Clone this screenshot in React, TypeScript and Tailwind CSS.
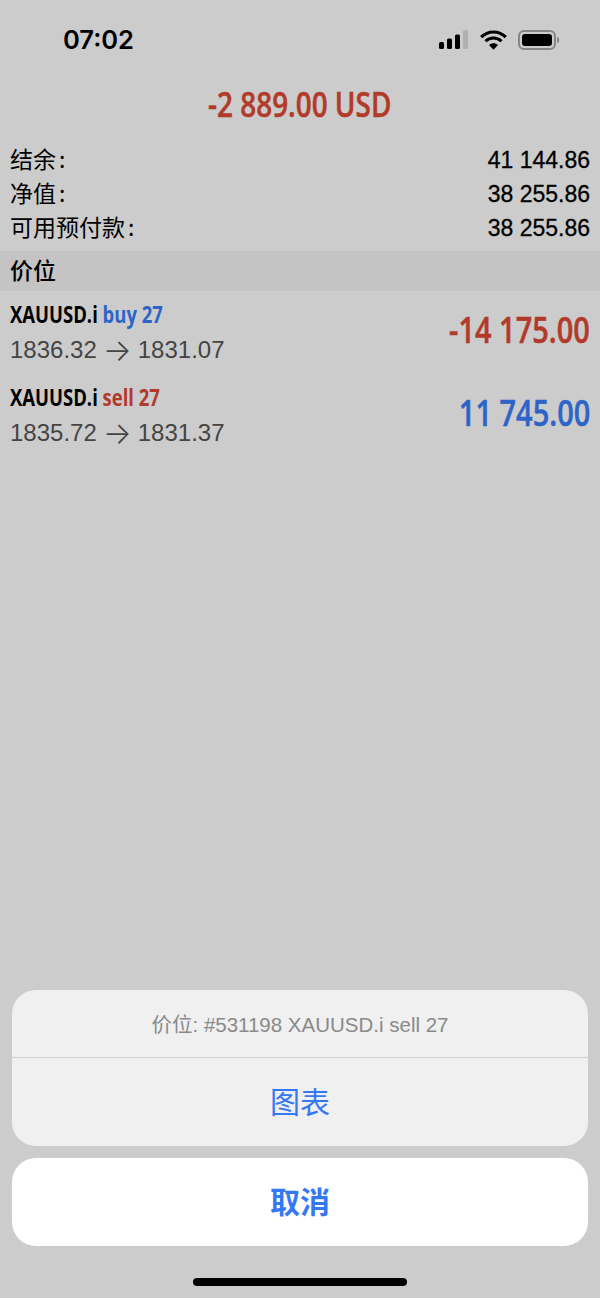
const sans = "font-['Liberation_Sans','Noto_Sans_CJK_SC',sans-serif]";

const summary = [
  { label: '结余', value: '41 144.86' },
  { label: '净值', value: '38 255.86' },
  { label: '可用预付款', value: '38 255.86' },
];

const positions = [
  { side: 'buy 27', sideColor: 'text-[#2d64c8]', from: '1836.32', to: '1831.07', profit: '-14 175.00', profitColor: 'text-[#b23a2a]' },
  { side: 'sell 27', sideColor: 'text-[#b23a2a]', from: '1835.72', to: '1831.37', profit: '11 745.00', profitColor: 'text-[#2d64c8]' },
];

function StatusIcons() {
  return (
    <div className="flex items-center gap-[11px]">
      <svg width="30" height="20" viewBox="0 0 30 20">
        <rect x="0" y="12" width="5" height="7" rx="1.5" fill="#000" />
        <rect x="8" y="8.500" width="5" height="10.500" rx="1.5" fill="#000" />
        <rect x="16" y="4.500" width="5" height="14.500" rx="1.5" fill="#000" />
        <rect x="24" y="0" width="5" height="19" rx="1.5" fill="#b0b0b0" />
      </svg>
      <svg width="27" height="20" viewBox="0 0 27 20">
        <path d="M1.200 7.200C4.300 4 8.600 2 13.500 2s9.200 2 12.300 5.200" fill="none" stroke="#000" strokeWidth="3.200" />
        <path d="M5.500 11.200c2.100-2.100 5-3.300 8-3.300s5.900 1.200 8 3.300" fill="none" stroke="#000" strokeWidth="3" />
        <path d="M9 15c1.200-1.200 2.800-1.800 4.500-1.800s3.300.6 4.500 1.800l-4.500 4.800z" fill="#000" />
      </svg>
      <div className="flex items-center gap-[1px]">
        <div className="w-[38px] h-[20px] rounded-[6px] border-2 border-[#868686] p-[2px]">
          <div className="w-full h-full rounded-[3px] bg-black" />
        </div>
        <div className="w-[2px] h-[6px] rounded-r-full bg-[#868686]" />
      </div>
    </div>
  );
}

export default function App() {
  return (
    <div className={`w-[600px] h-[1298px] flex flex-col bg-[#cccccc] overflow-hidden ${sans}`}>
      <div className="h-[80px] flex items-center justify-between pl-[63px] pr-[41px]">
        <span className="text-[25.5px] font-['Inter',sans-serif] font-semibold text-black leading-none">07:02</span>
        <StatusIcons />
      </div>

      <div className="h-[50px] flex items-center justify-center pb-[2px]">
        <span className="inline-block scale-x-[0.82] whitespace-nowrap text-[34px] font-['Open_Sans',sans-serif] font-semibold [-webkit-text-stroke-width:0.5px] text-[#b23a2a] leading-none">-2 889.00 USD</span>
      </div>

      <div className="h-[121px] pt-[13px]">
        {summary.map((row) => (
          <div key={row.label} className="h-[34px] flex items-center justify-between px-[10px] text-black">
            <span className="flex items-center gap-[3px] pb-[4px] text-[23px] font-['Noto_Sans_CJK_SC',sans-serif] font-normal leading-none">
              {row.label}
              <span>:</span>
            </span>
            <span className="text-[23px] [-webkit-text-stroke:0.3px_#000] leading-none">{row.value}</span>
          </div>
        ))}
      </div>

      <div className="h-[40px] flex items-center px-[10px] pb-[3px] bg-[#c4c4c4]">
        <span className="text-[23px] font-['Noto_Sans_CJK_SC',sans-serif] font-medium text-black leading-none">价位</span>
      </div>

      {positions.map((pos) => (
        <div key={pos.side} className="h-[83px] flex items-center justify-between px-[10px]">
          <div className="flex flex-col gap-[8px] pt-[1px]">
            <div className="origin-left scale-x-[0.77] whitespace-nowrap text-[24px] font-['Open_Sans',sans-serif] font-bold leading-[26px]">
              <span className="text-black">XAUUSD.i</span>{' '}
              <span className={pos.sideColor}>{pos.side}</span>
            </div>
            <div className="flex items-center text-[24px] text-[#444444] leading-[26px]">
              {pos.from}
              <span className="w-[41px] text-center text-[30px] font-['Inter',sans-serif] font-light leading-none">→</span>
              {pos.to}
            </div>
          </div>
          <span className={`origin-right scale-x-[0.805] whitespace-nowrap pb-[6px] text-[36px] font-['Open_Sans',sans-serif] font-semibold [-webkit-text-stroke-width:0.5px] leading-none ${pos.profitColor}`}>{pos.profit}</span>
        </div>
      ))}

      <div className="flex-1" />

      <div className="px-[12px] flex flex-col gap-[12px]">
        <div className="rounded-[24px] bg-[#f0f0f0] overflow-hidden">
          <div className="h-[68px] flex items-center justify-center pt-[3px] border-b border-[#d4d4d4] text-[20.500px] text-[#8a8a8a] leading-none">
            价位: #531198 XAUUSD.i sell 27
          </div>
          <div className="h-[88px] flex items-center justify-center pb-[4px] text-[30px] font-['Noto_Sans_CJK_SC',sans-serif] font-normal text-[#3478f6] leading-none">图表</div>
        </div>
        <div className="h-[88px] rounded-[24px] bg-white flex items-center justify-center pb-[5px] text-[30px] font-['Noto_Sans_CJK_SC',sans-serif] font-semibold text-[#3478f6] leading-none">取消</div>
      </div>

      <div className="h-[52px] flex items-end justify-center pb-[12px]">
        <div className="w-[214px] h-[8px] rounded-full bg-black" />
      </div>
    </div>
  );
}
